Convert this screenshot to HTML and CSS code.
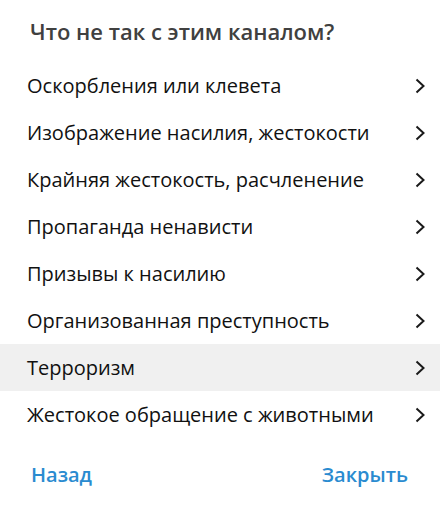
FILE: index.html
```html
<!DOCTYPE html>
<html>
<head>
    <meta charset="UTF-8">
    <title>Пожаловаться</title>
    <link rel="stylesheet" href="styles.css">
</head>
<body>
    <div class="box">
        <h1 class="title">Что не так с этим каналом?</h1>

        <ul class="reasons">
            <li class="reason"><span>Оскорбления или клевета</span><svg class="chevron" viewBox="0 0 10 16"><path d="M1.5 1.5 L8.5 8 L1.5 14.5"/></svg></li>
            <li class="reason"><span>Изображение насилия, жестокости</span><svg class="chevron" viewBox="0 0 10 16"><path d="M1.5 1.5 L8.5 8 L1.5 14.5"/></svg></li>
            <li class="reason"><span>Крайняя жестокость, расчленение</span><svg class="chevron" viewBox="0 0 10 16"><path d="M1.5 1.5 L8.5 8 L1.5 14.5"/></svg></li>
            <li class="reason"><span>Пропаганда ненависти</span><svg class="chevron" viewBox="0 0 10 16"><path d="M1.5 1.5 L8.5 8 L1.5 14.5"/></svg></li>
            <li class="reason"><span>Призывы к насилию</span><svg class="chevron" viewBox="0 0 10 16"><path d="M1.5 1.5 L8.5 8 L1.5 14.5"/></svg></li>
            <li class="reason"><span>Организованная преступность</span><svg class="chevron" viewBox="0 0 10 16"><path d="M1.5 1.5 L8.5 8 L1.5 14.5"/></svg></li>
            <li class="reason hover"><span>Терроризм</span><svg class="chevron" viewBox="0 0 10 16"><path d="M1.5 1.5 L8.5 8 L1.5 14.5"/></svg></li>
            <li class="reason"><span>Жестокое обращение с животными</span><svg class="chevron" viewBox="0 0 10 16"><path d="M1.5 1.5 L8.5 8 L1.5 14.5"/></svg></li>
        </ul>

        <div class="buttons">
            <button class="link">Назад</button>
            <button class="link">Закрыть</button>
        </div>
    </div>
</body>
</html>
```

FILE: styles.css
```css
body {
    margin: 0;
    background: #fff;
    font-family: "Open Sans", sans-serif;
}
.box {
    width: 440px;
}
.title {
    margin: 0;
    padding: 16px 30px 0;
    height: 47px;
    box-sizing: border-box;
    font-size: 22px;
    font-weight: 600;
    color: #404040;
    line-height: 30px;
}
.reasons {
    list-style: none;
    margin: 0;
    padding: 0;
    padding-top: 15px;
}
.reason {
    display: flex;
    align-items: center;
    justify-content: space-between;
    height: 47px;
    padding: 0 15px 0 27px;
    font-size: 20px;
    color: #111;
}
.reason.hover {
    background: #f0f0f0;
}
.chevron {
    width: 10px;
    height: 16px;
    fill: none;
    stroke: #1a1a1a;
    stroke-width: 2;
}
.buttons {
    display: flex;
    justify-content: space-between;
    padding: 23px 32px 0 31px;
}
.link {
    border: none;
    background: none;
    padding: 0;
    font-family: "Open Sans", sans-serif;
    font-size: 20px;
    font-weight: 600;
    color: #2a8bd0;
}
```
